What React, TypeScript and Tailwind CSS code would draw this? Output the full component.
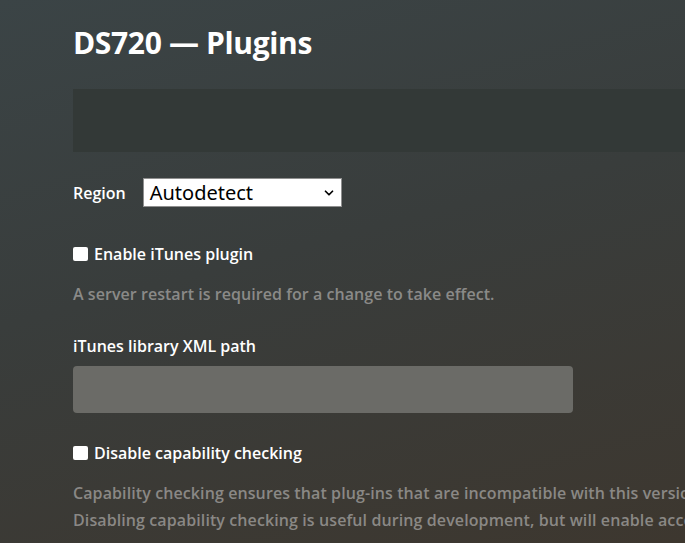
import { ChevronDown } from 'lucide-react';

export default function App() {
  return (
    <div className="w-[685px] h-[543px] overflow-hidden bg-[linear-gradient(165deg,#3b4446_0%,#393d3c_45%,#3d372f_100%)] font-['Open_Sans',sans-serif] text-white">
      <div className="w-[1100px] pl-[73px] pt-[23px]">
        <h1 className="text-[30px] leading-[40px] font-bold tracking-[-0.35px]">DS720 — Plugins</h1>

        <div className="mt-[26px] h-[63px] bg-[#333937]" />

        <div className="mt-[26px] flex items-center gap-[17px]">
          <label className="text-[16px] font-semibold">Region</label>
          <div className="relative w-[199px] h-[29px] bg-white border border-[#8f8f8f] flex items-center pl-[6px]">
            <span className="text-[20px] leading-none text-black font-['Noto_Sans',sans-serif]">Autodetect</span>
            <ChevronDown className="absolute right-[5px] top-[7px] w-[14px] h-[14px] text-black" strokeWidth={3} />
          </div>
        </div>

        <div className="mt-[35px] flex items-center gap-[6px]">
          <span className="w-[15px] h-[14px] bg-white rounded-[2px]" />
          <span className="text-[16px] leading-[24px] font-semibold">Enable iTunes plugin</span>
        </div>

        <p className="mt-[16px] text-[16px] leading-[24px] font-semibold tracking-[0.05px] text-[#8a8a88]">
          A server restart is required for a change to take effect.
        </p>

        <p className="mt-[28px] text-[16px] leading-[24px] font-semibold">iTunes library XML path</p>
        <div className="mt-[8px] w-[500px] h-[47px] rounded-[4px] bg-[#6b6b67]" />

        <div className="mt-[28px] flex items-center gap-[6px]">
          <span className="w-[15px] h-[14px] bg-white rounded-[2px]" />
          <span className="text-[16px] leading-[24px] font-semibold">Disable capability checking</span>
        </div>

        <div className="mt-[15px] text-[16px] leading-[27px] font-semibold tracking-[0.1px] text-[#8a8885] whitespace-nowrap">
          <p>Capability checking ensures that plug-ins that are incompatible with this version of the server are not loaded.</p>
          <p>Disabling capability checking is useful during development, but will enable access to incompatible plug-ins.</p>
        </div>
      </div>
    </div>
  );
}
